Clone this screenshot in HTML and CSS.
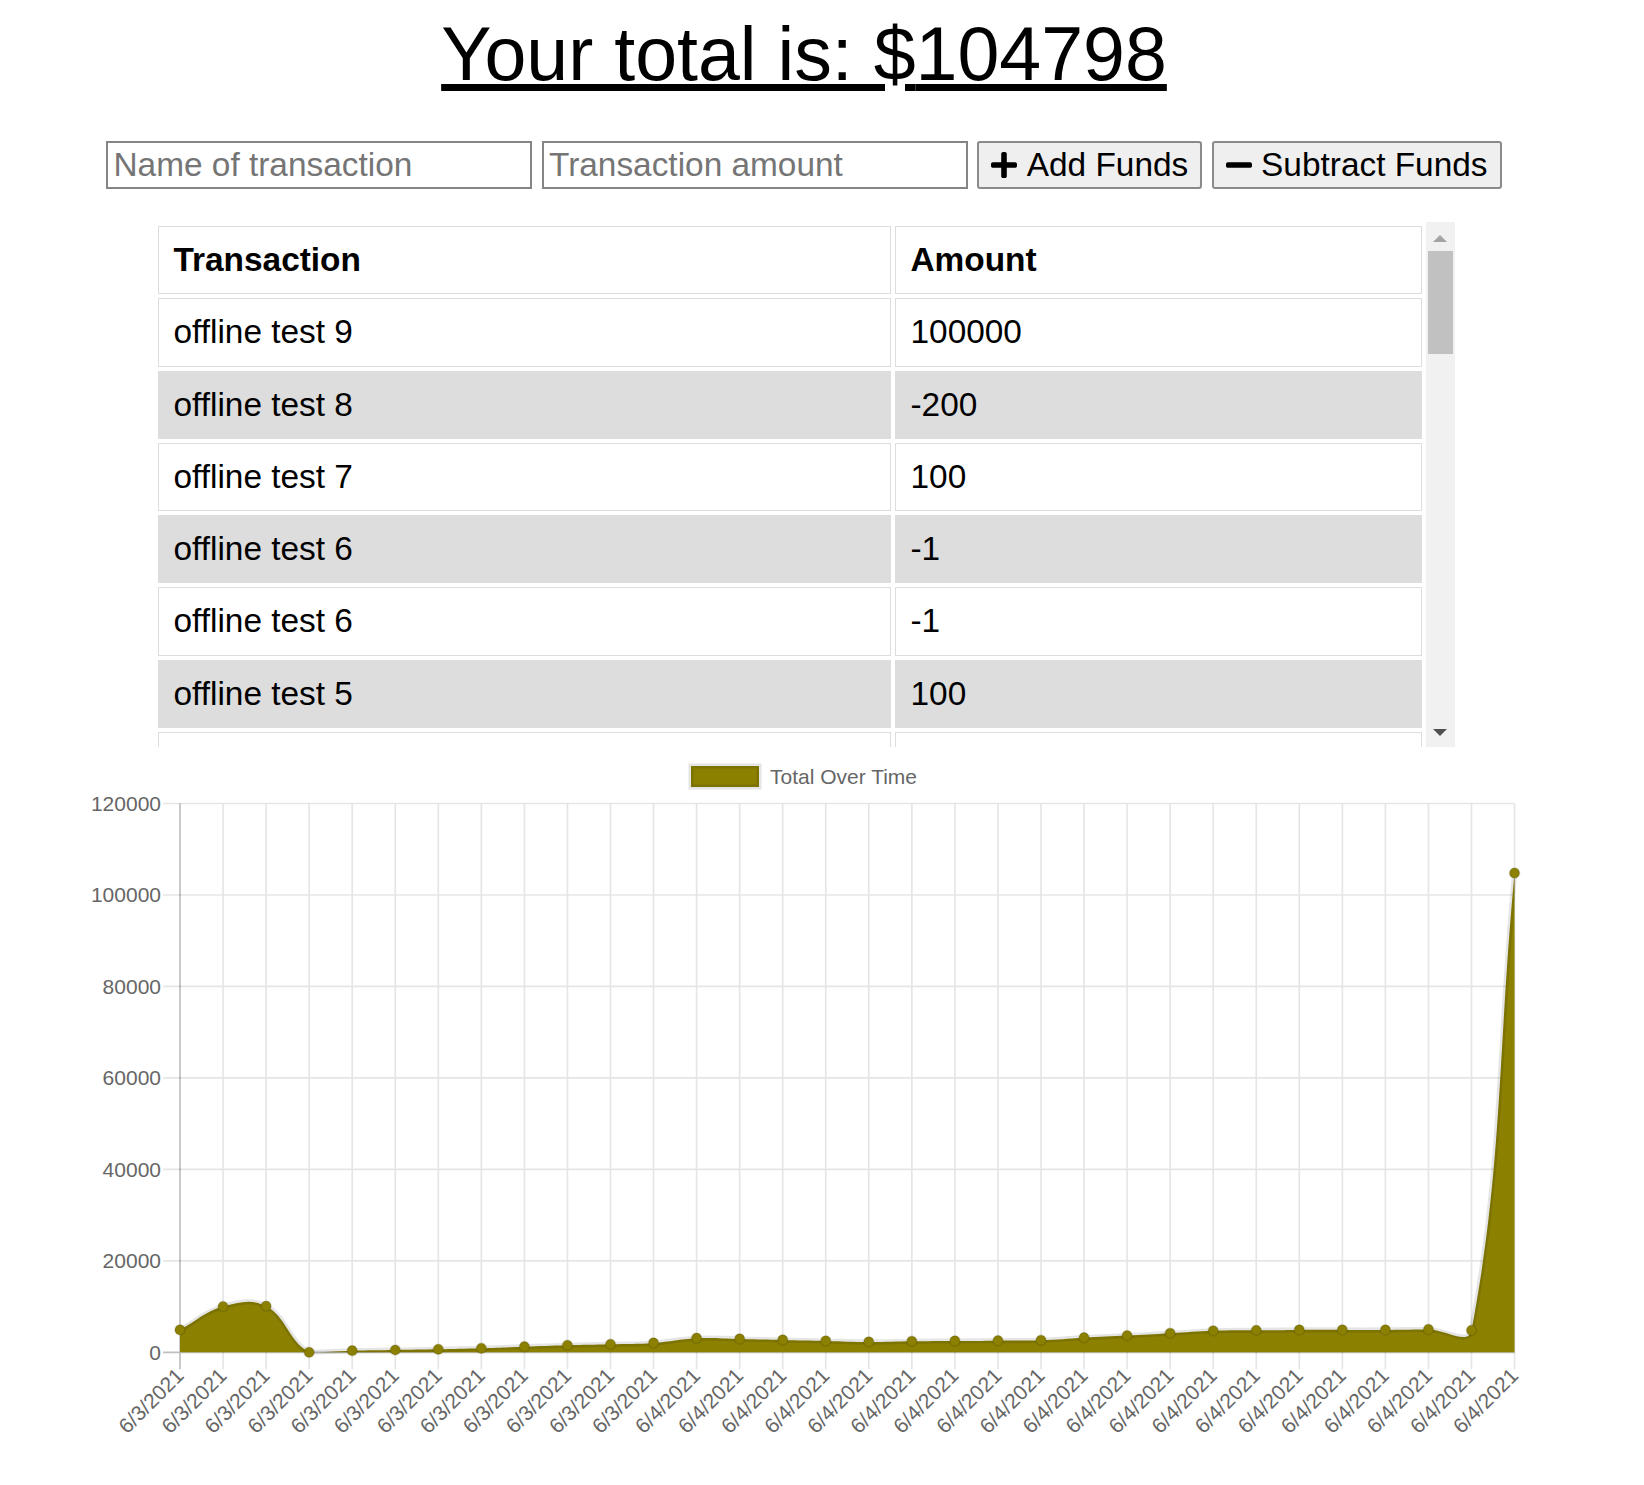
FILE: index.html
```html
<!DOCTYPE html>
<html lang="en">
<head>
<meta charset="utf-8">
<title>Budget Tracker</title>
<link rel="stylesheet" href="styles.css">
</head>
<body>
<div class="page">
  <h1 class="total">Your total is: $<span id="total">104798</span></h1>

  <form class="controls">
    <input class="field" type="text" placeholder="Name of transaction">
    <input class="field" type="number" placeholder="Transaction amount">
    <button class="btn" type="button"><svg class="icon" viewBox="0 32 448 448"><path d="M416 208H272V64c0-17.67-14.33-32-32-32h-32c-17.67 0-32 14.33-32 32v144H32c-17.67 0-32 14.33-32 32v32c0 17.67 14.33 32 32 32h144v144c0 17.67 14.33 32 32 32h32c17.67 0 32-14.33 32-32V304h144c17.67 0 32-14.33 32-32v-32c0-17.67-14.330-32-32-32z"/></svg>Add Funds</button>
    <button class="btn" type="button"><svg class="icon" viewBox="0 32 448 448"><path d="M416 208H32c-17.67 0-32 14.33-32 32v32c0 17.67 14.33 32 32 32h384c17.67 0 32-14.33 32-32v-32c0-17.67-14.33-32-32-32z"/></svg>Subtract Funds</button>
  </form>

  <div class="ledger">
    <div class="ledger-view">
      <table class="ledger-table">
        <thead>
          <tr><th class="col-name">Transaction</th><th>Amount</th></tr>
        </thead>
        <tbody>
          <tr><td>offline test 9</td><td>100000</td></tr>
          <tr><td>offline test 8</td><td>-200</td></tr>
          <tr><td>offline test 7</td><td>100</td></tr>
          <tr><td>offline test 6</td><td>-1</td></tr>
          <tr><td>offline test 6</td><td>-1</td></tr>
          <tr><td>offline test 5</td><td>100</td></tr>
          <tr><td>&nbsp;</td><td>&nbsp;</td></tr>
        </tbody>
      </table>
    </div>
    <div class="scrollbar">
      <div class="sb-btn"><span class="arrow-up"></span></div>
      <div class="sb-thumb"></div>
      <div class="sb-track"></div>
      <div class="sb-btn"><span class="arrow-down"></span></div>
    </div>
  </div>

  <svg class="chart" viewBox="0 747 1608 738" width="1608" height="738">
    <g class="legend">
      <rect class="legend-box" x="691" y="766" width="68" height="21"/>
      <text class="legend-label" x="770" y="783.5">Total Over Time</text>
    </g>
    <path class="grid-line" d="M163 1260.8H1514.55M163 1169.4H1514.55M163 1077.9H1514.55M163 986.4H1514.55M163 895H1514.55M163 803.5H1514.55M223.05 803.5V1369.3M266.1 803.5V1369.3M309.15 803.5V1369.3M352.2 803.5V1369.3M395.25 803.5V1369.3M438.3 803.5V1369.3M481.35 803.5V1369.3M524.4 803.5V1369.3M567.45 803.5V1369.3M610.5 803.5V1369.3M653.55 803.5V1369.3M696.6 803.5V1369.3M739.65 803.5V1369.3M782.7 803.5V1369.3M825.75 803.5V1369.3M868.8 803.5V1369.3M911.85 803.5V1369.3M954.9 803.5V1369.3M997.95 803.5V1369.3M1041 803.5V1369.3M1084.05 803.5V1369.3M1127.1 803.5V1369.3M1170.15 803.5V1369.3M1213.2 803.5V1369.3M1256.25 803.5V1369.3M1299.3 803.5V1369.3M1342.35 803.5V1369.3M1385.4 803.5V1369.3M1428.45 803.5V1369.3M1471.5 803.5V1369.3M1514.55 803.5V1369.3"/>
    <path class="grid-line grid-zero" d="M180 803.5V1369.3M163 1352.3H1514.55"/>
    <g class="y-labels">
      <text class="tick-label" x="161" y="1359.5">0</text>
      <text class="tick-label" x="161" y="1268">20000</text>
      <text class="tick-label" x="161" y="1176.6">40000</text>
      <text class="tick-label" x="161" y="1085.1">60000</text>
      <text class="tick-label" x="161" y="993.6">80000</text>
      <text class="tick-label" x="161" y="902.2">100000</text>
      <text class="tick-label" x="161" y="810.7">120000</text>
    </g>
    <g class="x-labels">
      <text class="tick-label" dy="7" transform="translate(180 1372) rotate(-45)">6/3/2021</text>
      <text class="tick-label" dy="7" transform="translate(223.05 1372) rotate(-45)">6/3/2021</text>
      <text class="tick-label" dy="7" transform="translate(266.1 1372) rotate(-45)">6/3/2021</text>
      <text class="tick-label" dy="7" transform="translate(309.15 1372) rotate(-45)">6/3/2021</text>
      <text class="tick-label" dy="7" transform="translate(352.2 1372) rotate(-45)">6/3/2021</text>
      <text class="tick-label" dy="7" transform="translate(395.25 1372) rotate(-45)">6/3/2021</text>
      <text class="tick-label" dy="7" transform="translate(438.3 1372) rotate(-45)">6/3/2021</text>
      <text class="tick-label" dy="7" transform="translate(481.35 1372) rotate(-45)">6/3/2021</text>
      <text class="tick-label" dy="7" transform="translate(524.4 1372) rotate(-45)">6/3/2021</text>
      <text class="tick-label" dy="7" transform="translate(567.45 1372) rotate(-45)">6/3/2021</text>
      <text class="tick-label" dy="7" transform="translate(610.5 1372) rotate(-45)">6/3/2021</text>
      <text class="tick-label" dy="7" transform="translate(653.55 1372) rotate(-45)">6/3/2021</text>
      <text class="tick-label" dy="7" transform="translate(696.6 1372) rotate(-45)">6/4/2021</text>
      <text class="tick-label" dy="7" transform="translate(739.65 1372) rotate(-45)">6/4/2021</text>
      <text class="tick-label" dy="7" transform="translate(782.7 1372) rotate(-45)">6/4/2021</text>
      <text class="tick-label" dy="7" transform="translate(825.75 1372) rotate(-45)">6/4/2021</text>
      <text class="tick-label" dy="7" transform="translate(868.8 1372) rotate(-45)">6/4/2021</text>
      <text class="tick-label" dy="7" transform="translate(911.85 1372) rotate(-45)">6/4/2021</text>
      <text class="tick-label" dy="7" transform="translate(954.9 1372) rotate(-45)">6/4/2021</text>
      <text class="tick-label" dy="7" transform="translate(997.95 1372) rotate(-45)">6/4/2021</text>
      <text class="tick-label" dy="7" transform="translate(1041 1372) rotate(-45)">6/4/2021</text>
      <text class="tick-label" dy="7" transform="translate(1084.05 1372) rotate(-45)">6/4/2021</text>
      <text class="tick-label" dy="7" transform="translate(1127.1 1372) rotate(-45)">6/4/2021</text>
      <text class="tick-label" dy="7" transform="translate(1170.15 1372) rotate(-45)">6/4/2021</text>
      <text class="tick-label" dy="7" transform="translate(1213.2 1372) rotate(-45)">6/4/2021</text>
      <text class="tick-label" dy="7" transform="translate(1256.25 1372) rotate(-45)">6/4/2021</text>
      <text class="tick-label" dy="7" transform="translate(1299.3 1372) rotate(-45)">6/4/2021</text>
      <text class="tick-label" dy="7" transform="translate(1342.35 1372) rotate(-45)">6/4/2021</text>
      <text class="tick-label" dy="7" transform="translate(1385.4 1372) rotate(-45)">6/4/2021</text>
      <text class="tick-label" dy="7" transform="translate(1428.45 1372) rotate(-45)">6/4/2021</text>
      <text class="tick-label" dy="7" transform="translate(1471.5 1372) rotate(-45)">6/4/2021</text>
      <text class="tick-label" dy="7" transform="translate(1514.55 1372) rotate(-45)">6/4/2021</text>
    </g>
    <path id="trend-area" class="trend-area" d=""/>
    <path id="trend-line" class="trend-line" d=""/>
    <g id="trend-points"></g>
  </svg>
</div>
<script src="script.js"></script>
</body>
</html>
```

FILE: styles.css
```css
* {
  box-sizing: border-box;
}

body {
  margin: 0;
  background: #ffffff;
  color: #000000;
  font-family: "Liberation Sans", Arial, sans-serif;
}

.page {
  width: 1608px;
  padding-top: 11px;
}

.total {
  margin: 0;
  font-size: 75.3px;
  line-height: 87px;
  font-weight: normal;
  text-align: center;
  text-decoration: underline;
}

.controls {
  display: flex;
  justify-content: center;
  gap: 9.5px;
  height: 48px;
  margin: 43px 0 0;
}

.field {
  width: 426px;
  height: 48px;
  padding: 2px 5px;
  border: 2px solid #858585;
  background: #ffffff;
  color: #000000;
  font: 33.4px "Liberation Sans", Arial, sans-serif;
}

.field::placeholder {
  color: #757575;
}

.btn {
  display: inline-flex;
  align-items: center;
  gap: 9.3px;
  height: 48px;
  padding: 0 12px;
  border: 2px solid #8a8a8a;
  border-radius: 3px;
  background: #efefef;
  color: #000000;
  font: 33.4px "Liberation Sans", Arial, sans-serif;
}

.icon {
  width: 26px;
  height: 26px;
  fill: #000000;
  flex: none;
}

.ledger {
  display: flex;
  width: 1301px;
  height: 525px;
  margin: 33px auto 0;
}

.ledger-view {
  flex: 1;
  overflow: hidden;
}

.ledger-table {
  width: 100%;
  border-spacing: 4px;
  font-size: 33.4px;
}

.ledger-table th,
.ledger-table td {
  box-sizing: content-box;
  border: 1px solid #dddddd;
  padding: 14px 15px;
  line-height: 38.3px;
  text-align: left;
}

.ledger-table th {
  font-weight: bold;
}

.col-name {
  width: 701px;
}

.ledger-table tbody tr:nth-child(even) td {
  background: #dddddd;
}

.scrollbar {
  display: flex;
  flex-direction: column;
  width: 29px;
  background: #f1f1f1;
}

.sb-btn {
  display: flex;
  align-items: center;
  justify-content: center;
  height: 29px;
  flex: none;
}

.arrow-up {
  width: 0;
  height: 0;
  margin-top: 3px;
  border-left: 7px solid transparent;
  border-right: 7px solid transparent;
  border-bottom: 7px solid #a3a3a3;
}

.arrow-down {
  width: 0;
  height: 0;
  border-left: 7px solid transparent;
  border-right: 7px solid transparent;
  border-top: 7px solid #505050;
}

.sb-thumb {
  height: 103px;
  margin: 0 2px;
  background: #c1c1c1;
  flex: none;
}

.sb-track {
  flex: 1;
}

.chart {
  display: block;
}

.grid-line {
  fill: none;
  stroke: rgba(0, 0, 0, 0.1);
  stroke-width: 1.7;
}

.grid-zero {
  stroke: rgba(0, 0, 0, 0.25);
}

.tick-label,
.legend-label {
  font-family: "Liberation Sans", Arial, sans-serif;
  font-size: 21px;
  fill: #666666;
}

.y-labels .tick-label,
.x-labels .tick-label {
  text-anchor: end;
}

.legend-box {
  fill: #8b8000;
  stroke: rgba(0, 0, 0, 0.1);
  stroke-width: 5.1;
}

.trend-area {
  fill: #8b8000;
}

.trend-line {
  fill: none;
  stroke: rgba(0, 0, 0, 0.1);
  stroke-width: 5.1;
}

.point {
  fill: #8b8000;
  stroke: rgba(0, 0, 0, 0.1);
  stroke-width: 1.7;
}
```

FILE: script.js
```js
(function () {
  var NS = "http://www.w3.org/2000/svg";
  var totals = [4900, 10000, 10100, 0, 350, 500, 650, 870, 1230, 1530, 1750, 2040,
    3080, 2920, 2700, 2480, 2260, 2420, 2480, 2550, 2640, 3200, 3650, 4170,
    4700, 4800, 4900, 4899, 4898, 4998, 4798, 104798];
  var left = 180, step = 43.05, top = 803.5, bottom = 1352.3, max = 120000, tension = 0.4;
  var right = left + step * (totals.length - 1);

  var pts = totals.map(function (v, i) {
    return { x: left + step * i, y: bottom - (v / max) * (bottom - top) };
  });

  function cap(v, lo, hi) {
    return Math.max(Math.min(v, hi), lo);
  }

  var cps = pts.map(function (p, i) {
    var a = pts[i - 1] || p;
    var b = pts[i + 1] || p;
    var d01 = Math.sqrt(Math.pow(p.x - a.x, 2) + Math.pow(p.y - a.y, 2));
    var d12 = Math.sqrt(Math.pow(b.x - p.x, 2) + Math.pow(b.y - p.y, 2));
    var s01 = d01 / (d01 + d12);
    var s12 = d12 / (d01 + d12);
    if (isNaN(s01)) { s01 = 0; }
    if (isNaN(s12)) { s12 = 0; }
    var fa = tension * s01;
    var fb = tension * s12;
    return {
      px: cap(p.x - fa * (b.x - a.x), left, right),
      py: cap(p.y - fa * (b.y - a.y), top, bottom),
      nx: cap(p.x + fb * (b.x - a.x), left, right),
      ny: cap(p.y + fb * (b.y - a.y), top, bottom)
    };
  });

  function f(n) { return n.toFixed(2); }

  var d = "M" + f(pts[0].x) + " " + f(pts[0].y);
  for (var i = 1; i < pts.length; i++) {
    d += "C" + f(cps[i - 1].nx) + " " + f(cps[i - 1].ny) + " " +
      f(cps[i].px) + " " + f(cps[i].py) + " " + f(pts[i].x) + " " + f(pts[i].y);
  }

  document.getElementById("trend-line").setAttribute("d", d);
  document.getElementById("trend-area").setAttribute("d",
    d + "L" + f(right) + " " + f(bottom) + "L" + f(left) + " " + f(bottom) + "Z");

  var g = document.getElementById("trend-points");
  pts.forEach(function (p) {
    var c = document.createElementNS(NS, "circle");
    c.setAttribute("class", "point");
    c.setAttribute("cx", f(p.x));
    c.setAttribute("cy", f(p.y));
    c.setAttribute("r", "5.1");
    g.appendChild(c);
  });
})();
```
